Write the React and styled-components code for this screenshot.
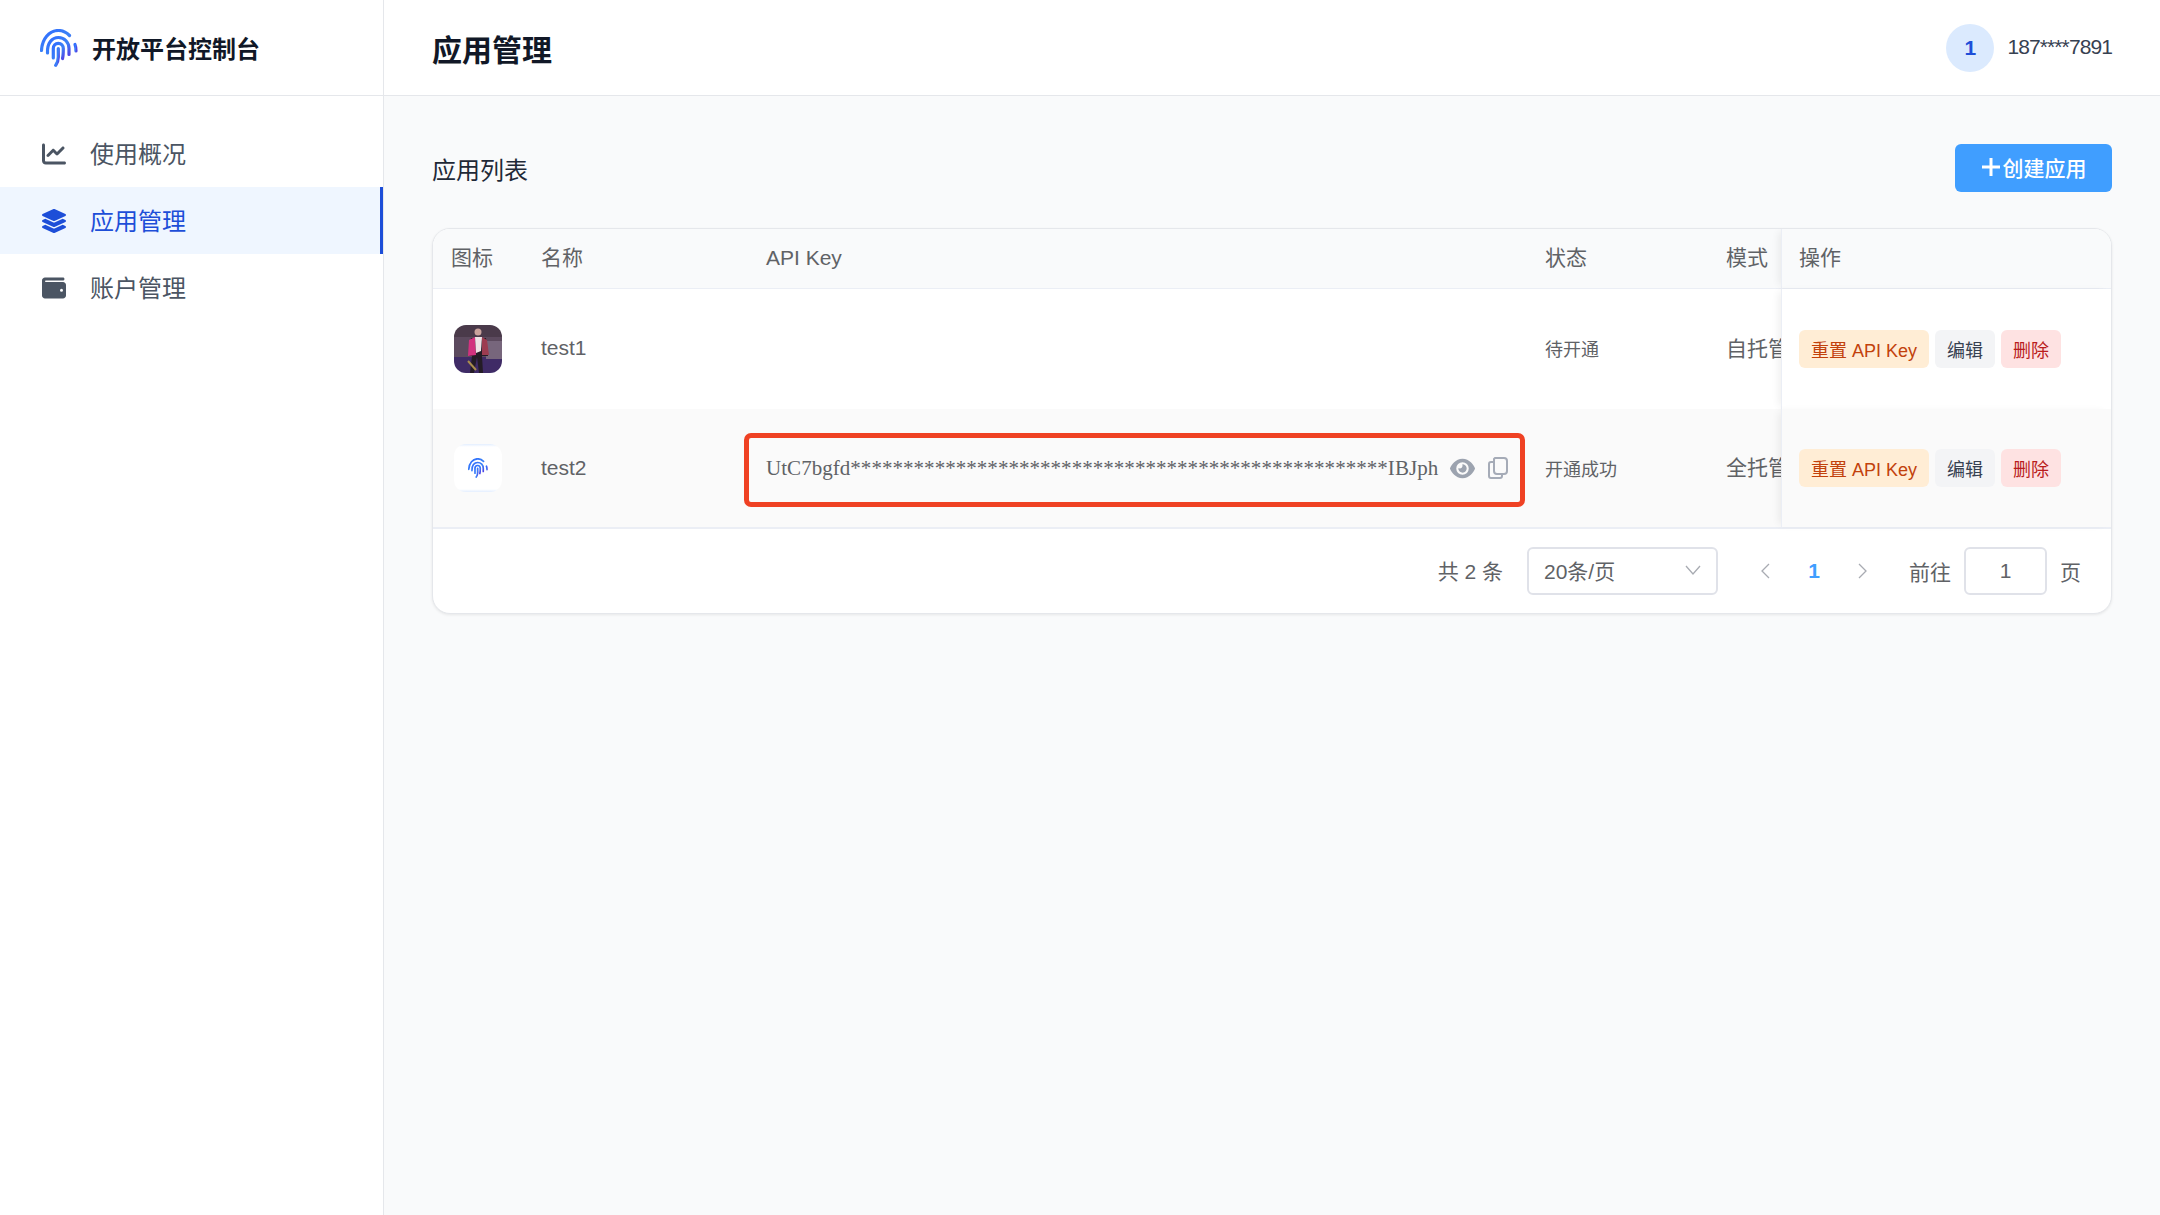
import React from "react";
import styled, { createGlobalStyle } from "styled-components";
import { FaLayerGroup } from "react-icons/fa";
import { FaChartLine, FaWallet, FaEye } from "react-icons/fa6";

const GlobalStyle = createGlobalStyle`
  html, body {
    margin: 0;
    padding: 0;
    height: 100%;
    background: #f9fafb;
    font-family: "Liberation Sans", "Noto Sans CJK SC", sans-serif;
  }
  * {
    box-sizing: border-box;
  }
`;

const Page = styled.div`
  display: grid;
  grid-template-columns: 384px 1fr;
  height: 100vh;
  overflow: hidden;
`;

const Sidebar = styled.aside`
  background: #fff;
  border-right: 1px solid #e5e7eb;
`;

const Brand = styled.div`
  height: 96px;
  display: flex;
  align-items: center;
  gap: 14px;
  padding-left: 40px;
  border-bottom: 1px solid #e5e7eb;
`;

const BrandName = styled.span`
  font-size: 24px;
  font-weight: 700;
  color: #111827;
`;

const Nav = styled.nav`
  padding-top: 24px;
`;

const NavItem = styled.div`
  height: 67px;
  display: flex;
  align-items: center;
  gap: 24px;
  padding-left: 42px;
  font-size: 24px;
  color: ${(props) => (props.active ? "#1d4ed8" : "#4b5563")};
  background: ${(props) => (props.active ? "#eff6ff" : "transparent")};
  border-right: 3px solid ${(props) => (props.active ? "#1d4ed8" : "transparent")};
`;

const NavLabel = styled.span`
  margin-top: -2px;
`;

const Main = styled.main`
  min-width: 0;
`;

const Header = styled.header`
  height: 96px;
  display: flex;
  align-items: center;
  justify-content: space-between;
  padding: 0 48px;
  background: #fff;
  border-bottom: 1px solid #e5e7eb;
`;

const PageTitle = styled.h1`
  margin: 0;
  font-size: 30px;
  font-weight: 700;
  color: #111827;
`;

const User = styled.div`
  display: flex;
  align-items: center;
  gap: 13px;
  font-size: 21px;
  color: #374151;
`;

const UserBadge = styled.div`
  width: 48px;
  height: 48px;
  border-radius: 50%;
  display: flex;
  align-items: center;
  justify-content: center;
  background: #dbeafe;
  color: #1d4ed8;
  font-weight: 700;
`;

const Phone = styled.span`
  margin-top: -2px;
  letter-spacing: -0.9px;
`;

const Content = styled.div`
  padding: 48px;
`;

const SectionHead = styled.div`
  display: flex;
  align-items: center;
  justify-content: space-between;
  margin-bottom: 36px;
`;

const SectionTitle = styled.h2`
  margin: 0;
  font-size: 24px;
  font-weight: 400;
  color: #1f2937;
`;

const CreateButton = styled.button`
  width: 157px;
  height: 48px;
  display: flex;
  align-items: center;
  justify-content: center;
  gap: 2px;
  padding: 0 0 2px;
  border: none;
  border-radius: 6px;
  background: #409eff;
  color: #fff;
  font: inherit;
  font-size: 21px;
  font-weight: 500;
`;

const Card = styled.section`
  background: #fff;
  border: 1px solid #e5e7eb;
  border-radius: 18px;
  box-shadow: 0 1px 3px rgba(0, 0, 0, 0.08);
  overflow: hidden;
`;

const Row = styled.div`
  display: grid;
  grid-template-columns: 90px 225px 779px 181px 73px 330px;
  height: ${(props) => props.height}px;
  background: ${(props) => props.bg};
  border-bottom: ${(props) => (props.head ? "1px solid #ebeef5" : "none")};
  color: #606266;
  font-size: 21px;
`;

const Cell = styled.div`
  position: relative;
  display: flex;
  align-items: center;
  padding-left: ${(props) => props.left ?? 18}px;
  padding-bottom: ${(props) => props.lift || 0}px;
  white-space: nowrap;
  font-size: ${(props) => props.size || 21}px;
  overflow: ${(props) => (props.clip ? "hidden" : "visible")};
`;

const ActionCell = styled(Cell)`
  gap: 6px;
  padding-left: 17px;
  border-left: 1px solid #ebeef5;
  box-shadow: -5px 0 8px -3px rgba(0, 0, 0, 0.07);
  background: ${(props) => props.bg};
`;

const Thumb = styled.div`
  width: 48px;
  height: 48px;
  border-radius: 12px;
  overflow: hidden;
  display: flex;
  align-items: center;
  justify-content: center;
  background: linear-gradient(#e3eeff, #fff 6%, #fff 94%, #e3eeff);
`;

const PhotoSvg = styled.svg`
  filter: blur(0.6px);
`;

const KeyText = styled.span`
  font-family: "Liberation Serif", "Noto Sans CJK SC", serif;
  font-size: 21px;
  letter-spacing: 0.04px;
  color: #606266;
`;

const KeyIcons = styled.span`
  display: flex;
  align-items: center;
  gap: 13px;
  margin-left: 12px;
  color: #9ca3af;
`;

const Annotation = styled.div`
  position: absolute;
  top: 24px;
  bottom: 20px;
  left: -4px;
  right: 2px;
  border: 5px solid #ef4123;
  border-radius: 7px;
`;

const Tag = styled.span`
  height: 38px;
  padding: 0 12px;
  display: inline-flex;
  align-items: center;
  border-radius: 6px;
  font-size: 18px;
  color: ${(props) => props.color};
  background: ${(props) => props.bg};
`;

const Pager = styled.div`
  height: 86px;
  display: flex;
  align-items: center;
  justify-content: flex-end;
  padding-right: 30px;
  border-top: 2px solid #ebeef5;
  color: #606266;
  font-size: 21px;
`;

const Total = styled.span`
  margin: -2px 24px 0 0;
`;

const Field = styled.div`
  height: 48px;
  width: ${(props) => props.width}px;
  display: flex;
  align-items: center;
  justify-content: ${(props) => (props.center ? "center" : "space-between")};
  padding: ${(props) => (props.center ? "0" : "0 14px 2px 15px")};
  border: 2px solid #e0e2e9;
  border-radius: 6px;
  background: #fff;
`;

const PageArrows = styled.div`
  display: flex;
  align-items: center;
  margin: 0 40px 0 41px;
  color: #a8abb2;
`;

const Current = styled.span`
  width: 86px;
  text-align: center;
  color: #409eff;
  font-weight: 700;
`;

const Goto = styled.span`
  margin: 0 13px 0 0;
`;

const PageUnit = styled.span`
  margin-left: 13px;
`;

// fingerprint logo, also used small as the thumbnail of test2
const Fingerprint = ({ size, id }) => (
  <svg width={size} height={size} viewBox="0 0 38 38" fill="none">
    <defs>
      <linearGradient id={id} x1="0" y1="0" x2="1" y2="1">
        <stop offset="0" stopColor="#2f6bff" />
        <stop offset="0.6" stopColor="#3b82f6" />
        <stop offset="1" stopColor="#4f46e5" />
      </linearGradient>
    </defs>
    <g stroke={`url(#${id})`} strokeWidth="3.2" strokeLinecap="round">
      <path d="M1.500 21.500C2 10 9 1.500 18.500 1.500c4 0 8 2 11 5" />
      <path d="M35 15.500c.8 2 1 4 1 6.500" />
      <path d="M7.500 24C7 14 12 8.500 18.500 8.500c6 0 10.500 5 10.500 11v6" />
      <path d="M13.300 29V19.500c0-3 2-5.200 5-5.200s5 2.200 5 5.200c0 4 0 7-.8 10" />
      <path d="M18.300 19.500V28c0 3.500-1 6-2.600 8.300" />
    </g>
  </svg>
);

// small stage photo of test1
const StagePhoto = () => (
  <PhotoSvg width="48" height="48" viewBox="0 0 48 48">
    <rect x="-4" y="-4" width="56" height="56" fill="#5c4a5e" />
    <rect x="-4" y="-4" width="56" height="16" fill="#4a3a4a" />
    <rect x="-4" y="32" width="56" height="20" fill="#3f2b66" />
    <rect x="32" y="16" width="16" height="18" fill="#77667c" />
    <path d="M17 13h15l2 18h-6l1 17h-4l-2-16-3 16h-4l2-17h-3z" fill="#241c26" />
    <path d="M15 15l6-3 1 18-8 1z" fill="#d2327f" />
    <path d="M28 12l5 3 2 15-7 0z" fill="#9c3c50" />
    <path d="M21 12h7l-1 14-5 2z" fill="#eee2e6" />
    <circle cx="24" cy="7" r="3.500" fill="#c9a29c" />
    <path d="M14 36l8 9" stroke="#a98d4e" strokeWidth="2" />
  </PhotoSvg>
);

const CopyIcon = () => (
  <svg width="20" height="22" viewBox="0 0 20 22" fill="none" stroke="#a5abb7" strokeWidth="2">
    <path d="M7 1h9a3 3 0 0 1 3 3v10a3 3 0 0 1-3 3H9a3 3 0 0 1-3-3V2z" />
    <path d="M6 5H3a2 2 0 0 0-2 2v12a2 2 0 0 0 2 2h9a2 2 0 0 0 2-2v-2" />
  </svg>
);

const Chevron = ({ dir }) => (
  <svg width="12" height="20" viewBox="0 0 12 20" fill="none" stroke="#a8abb2" strokeWidth="1.300">
    <path d={dir === "left" ? "M10 3L3 10l7 7" : "M2 3l7 7-7 7"} />
  </svg>
);

const Actions = ({ bg }) => (
  <ActionCell bg={bg}>
    <Tag color="#c2410c" bg="#ffedd5">重置 API Key</Tag>
    <Tag color="#374151" bg="#f3f4f6">编辑</Tag>
    <Tag color="#b91c1c" bg="#fee2e2">删除</Tag>
  </ActionCell>
);

const App = () => {
  const apiKey = "UtC7bgfd" + "*".repeat(51) + "IBJph";
  return (
    <Page>
      <GlobalStyle />
      <Sidebar>
        <Brand>
          <Fingerprint size={38} id="brand-print" />
          <BrandName>开放平台控制台</BrandName>
        </Brand>
        <Nav>
          <NavItem>
            <FaChartLine size={24} />
            <NavLabel>使用概况</NavLabel>
          </NavItem>
          <NavItem active>
            <FaLayerGroup size={24} />
            <NavLabel>应用管理</NavLabel>
          </NavItem>
          <NavItem>
            <FaWallet size={24} />
            <NavLabel>账户管理</NavLabel>
          </NavItem>
        </Nav>
      </Sidebar>
      <Main>
        <Header>
          <PageTitle>应用管理</PageTitle>
          <User>
            <UserBadge>1</UserBadge>
            <Phone>187****7891</Phone>
          </User>
        </Header>
        <Content>
          <SectionHead>
            <SectionTitle>应用列表</SectionTitle>
            <CreateButton>
              <svg width="20" height="20" viewBox="0 0 20 20" stroke="#fff" strokeWidth="3">
                <path d="M10 1v18M1 10h18" />
              </svg>
              创建应用
            </CreateButton>
          </SectionHead>
          <Card>
            <Row head height={60} bg="#f9fafb">
              <Cell lift={5}>图标</Cell>
              <Cell lift={5}>名称</Cell>
              <Cell lift={2}>API Key</Cell>
              <Cell lift={5}>状态</Cell>
              <Cell clip lift={5}>模式</Cell>
              <ActionCell bg="#f9fafb" lift={5}>操作</ActionCell>
            </Row>
            <Row height={120} bg="#fff">
              <Cell left={21}>
                <Thumb>
                  <StagePhoto />
                </Thumb>
              </Cell>
              <Cell lift={2}>test1</Cell>
              <Cell />
              <Cell size={18} lift={2}>待开通</Cell>
              <Cell clip lift={5}>自托管</Cell>
              <Actions bg="#fff" />
            </Row>
            <Row height={118} bg="#fafafa">
              <Cell left={21}>
                <Thumb>
                  <Fingerprint size={20} id="thumb-print" />
                </Thumb>
              </Cell>
              <Cell>test2</Cell>
              <Cell>
                <KeyText>{apiKey}</KeyText>
                <KeyIcons>
                  <FaEye size={25} />
                  <CopyIcon />
                </KeyIcons>
                <Annotation />
              </Cell>
              <Cell size={18}>开通成功</Cell>
              <Cell clip lift={5}>全托管</Cell>
              <Actions bg="#fafafa" />
            </Row>
            <Pager>
              <Total>共 2 条</Total>
              <Field width={191}>
                20条/页
                <svg width="18" height="12" viewBox="0 0 18 12" fill="none" stroke="#a8abb2" strokeWidth="1.300">
                  <path d="M2 2l7 8 7-8" />
                </svg>
              </Field>
              <PageArrows>
                <Chevron dir="left" />
                <Current>1</Current>
                <Chevron dir="right" />
              </PageArrows>
              <Goto>前往</Goto>
              <Field width={83} center>1</Field>
              <PageUnit>页</PageUnit>
            </Pager>
          </Card>
        </Content>
      </Main>
    </Page>
  );
};

export default App;
